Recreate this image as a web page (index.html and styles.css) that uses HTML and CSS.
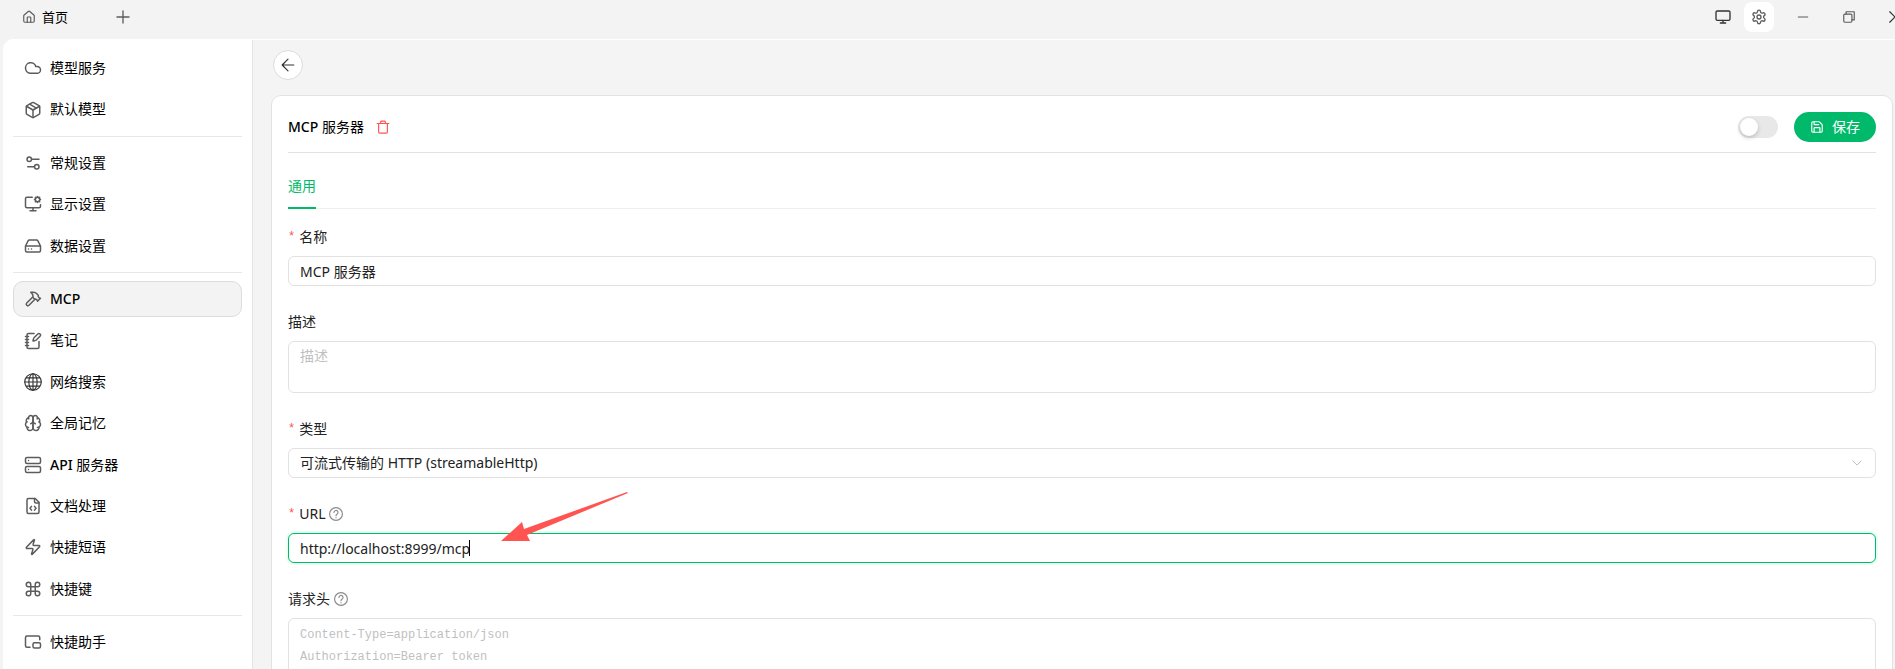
FILE: index.html
```html
<!DOCTYPE html>
<html lang="zh-CN">
<head>
<meta charset="utf-8">
<title>MCP 服务器</title>
<link rel="stylesheet" href="styles.css">
</head>
<body>
<header class="titlebar">
  <button class="tab-home" type="button">
    <svg class="icon i14" viewBox="0 0 24 24"><path d="M15 21v-8a1 1 0 0 0-1-1h-4a1 1 0 0 0-1 1v8"/><path d="M3 10a2 2 0 0 1 .7-1.5l7-6a2 2 0 0 1 2.6 0l7 6A2 2 0 0 1 21 10v9a2 2 0 0 1-2 2H5a2 2 0 0 1-2-2z"/></svg>
    <span>首页</span>
  </button>
  <button class="tab-add" type="button" aria-label="新建标签">
    <svg class="icon i16" viewBox="0 0 24 24"><path d="M3 12h18M12 3v18"/></svg>
  </button>
  <div class="title-tools">
    <button class="tool" type="button" aria-label="显示">
      <svg class="icon dark i16" viewBox="0 0 24 24"><rect x="1.500" y="3" width="21" height="14" rx="2"/><path d="M8 21h8M12 17v4"/></svg>
    </button>
    <button class="tool tool-active" type="button" aria-label="设置">
      <svg class="icon i16" viewBox="0 0 24 24"><path d="M9.700 4.100a2.300 2.300 0 0 1 4.600 0 2.300 2.300 0 0 0 3.300 1.900 2.300 2.300 0 0 1 2.300 4 2.300 2.300 0 0 0 0 3.900 2.300 2.300 0 0 1-2.300 4 2.300 2.300 0 0 0-3.300 1.900 2.300 2.300 0 0 1-4.600 0 2.300 2.300 0 0 0-3.300-1.900 2.300 2.300 0 0 1-2.300-4 2.300 2.300 0 0 0 0-3.900 2.300 2.300 0 0 1 2.300-4 2.300 2.300 0 0 0 3.300-1.900"/><circle cx="12" cy="12" r="3"/></svg>
    </button>
    <div class="window-controls">
      <button type="button" aria-label="最小化"><svg class="icon i14" viewBox="0 0 24 24"><path d="M4 12h16"/></svg></button>
      <button type="button" aria-label="还原"><svg class="icon i14" viewBox="0 0 24 24"><rect x="3" y="7" width="14" height="14" rx="2"/><path d="M7 7V3h14v14h-4"/></svg></button>
      <button type="button" aria-label="关闭"><svg class="icon dark i14" viewBox="0 0 24 24"><path d="M3 3l18 18M21 3L3 21"/></svg></button>
    </div>
  </div>
</header>

<div class="workspace">
  <nav class="sidebar">
    <a class="nav-item" href="#"><svg class="icon i18" viewBox="0 0 24 24"><path d="M17.500 19H9a7 7 0 1 1 6.710-9h1.790a4.500 4.500 0 1 1 0 9Z"/></svg>模型服务</a>
    <a class="nav-item" href="#"><svg class="icon i18" viewBox="0 0 24 24"><path d="M11 21.730a2 2 0 0 0 2 0l7-4A2 2 0 0 0 21 16V8a2 2 0 0 0-1-1.730l-7-4a2 2 0 0 0-2 0l-7 4A2 2 0 0 0 3 8v8a2 2 0 0 0 1 1.730z"/><path d="M12 22V12"/><path d="M3.300 7L12 12l8.700-5"/><path d="M7.500 4.270l9 5.150"/></svg>默认模型</a>
    <hr class="nav-divider">
    <a class="nav-item" href="#"><svg class="icon i18" viewBox="0 0 24 24"><path d="M20 7h-9M14 17H5"/><circle cx="17" cy="17" r="3"/><circle cx="7" cy="7" r="3"/></svg>常规设置</a>
    <a class="nav-item" href="#"><svg class="icon i18" viewBox="0 0 24 24"><path d="M12 17v4M8 21h8M22 13v2a2 2 0 0 1-2 2H4a2 2 0 0 1-2-2V5a2 2 0 0 1 2-2h7"/><circle cx="18" cy="6" r="3"/><path d="M18 3V2M18 10V9M21 6h1M14 6h1M20.100 3.900l.8-.8M15.100 8.900l.8-.8M20.100 8.100l.8.8M15.100 3.100l.8.8"/></svg>显示设置</a>
    <a class="nav-item" href="#"><svg class="icon i18" viewBox="0 0 24 24"><path d="M22 12H2M5.450 5.110L2 12v6a2 2 0 0 0 2 2h16a2 2 0 0 0 2-2v-6l-3.450-6.890A2 2 0 0 0 16.760 4H7.240a2 2 0 0 0-1.790 1.110zM6 16h.01M10 16h.01"/></svg>数据设置</a>
    <hr class="nav-divider">
    <a class="nav-item nav-current" href="#" aria-current="page"><svg class="icon i18" viewBox="0 0 24 24"><path d="M15 12l-8.373 8.373a1 1 0 1 1-3-3L12 9M18 15l4-4M21.500 11.500l-1.914-1.914A2 2 0 0 1 19 8.172V7l-2.260-2.260a6 6 0 0 0-4.202-1.756L9 2.960l.920.820A6.180 6.180 0 0 1 12 8.400V10l2 2h1.172a2 2 0 0 1 1.414.586L18.500 14.500"/></svg><span class="latin">MCP</span></a>
    <a class="nav-item" href="#"><svg class="icon i18" viewBox="0 0 24 24"><path d="M13.400 2H6a2 2 0 0 0-2 2v16a2 2 0 0 0 2 2h12a2 2 0 0 0 2-2v-7.400M2 6h4M2 10h4M2 14h4M2 18h4"/><path d="M21.378 5.626a1 1 0 1 0-3.004-3.004l-5.010 5.012a2 2 0 0 0-.506.854l-.837 2.870a.5.5 0 0 0 .620.620l2.870-.837a2 2 0 0 0 .854-.506z"/></svg>笔记</a>
    <a class="nav-item" href="#"><svg class="icon dark fine i18" viewBox="0 0 24 24"><circle cx="12" cy="12" r="11"/><ellipse cx="12" cy="12" rx="5.500" ry="11"/><path d="M12 1v22M1 12h22M3 6.500h18M3 17.500h18"/></svg>网络搜索</a>
    <a class="nav-item" href="#"><svg class="icon i18" viewBox="0 0 24 24"><path d="M12 5a3 3 0 1 0-5.997.125 4 4 0 0 0-2.526 5.770 4 4 0 0 0 .556 6.588A4 4 0 1 0 12 18Z"/><path d="M12 5a3 3 0 1 1 5.997.125 4 4 0 0 1 2.526 5.770 4 4 0 0 1-.556 6.588A4 4 0 1 1 12 18Z"/><path d="M15 13a4.500 4.500 0 0 1-3-4 4.500 4.500 0 0 1-3 4M17.599 6.500a3 3 0 0 0 .399-1.375M6.003 5.125A3 3 0 0 0 6.401 6.500M3.477 10.896a4 4 0 0 1 .585-.396M19.938 10.500a4 4 0 0 1 .585.396M6 18a4 4 0 0 1-1.967-.516M19.967 17.484A4 4 0 0 1 18 18"/></svg>全局记忆</a>
    <a class="nav-item" href="#"><svg class="icon i18" viewBox="0 0 24 24"><rect x="2" y="2" width="20" height="8" rx="2"/><rect x="2" y="14" width="20" height="8" rx="2"/><path d="M6 6h.01M6 18h.01"/></svg><span><span class="latin">API</span> 服务器</span></a>
    <a class="nav-item" href="#"><svg class="icon i18" viewBox="0 0 24 24"><path d="M15 2H6a2 2 0 0 0-2 2v16a2 2 0 0 0 2 2h12a2 2 0 0 0 2-2V7Z"/><path d="M14 2v4a2 2 0 0 0 2 2h4M10 12.500L8 15l2 2.500M14 12.500l2 2.500-2 2.500"/></svg>文档处理</a>
    <a class="nav-item" href="#"><svg class="icon i18" viewBox="0 0 24 24"><path d="M4 14a1 1 0 0 1-.780-1.630l9.900-10.200a.5.5 0 0 1 .860.460l-1.920 6.020A1 1 0 0 0 13 10h7a1 1 0 0 1 .780 1.630l-9.900 10.200a.5.5 0 0 1-.860-.460l1.920-6.020A1 1 0 0 0 11 14z"/></svg>快捷短语</a>
    <a class="nav-item" href="#"><svg class="icon i18" viewBox="0 0 24 24"><path d="M15 6v12a3 3 0 1 0 3-3H6a3 3 0 1 0 3 3V6a3 3 0 1 0-3 3h12a3 3 0 1 0-3-3"/></svg>快捷键</a>
    <hr class="nav-divider">
    <a class="nav-item" href="#"><svg class="icon i18" viewBox="0 0 24 24"><path d="M21 9V6a2 2 0 0 0-2-2H4a2 2 0 0 0-2 2v11a2 2 0 0 0 2 2h4"/><rect x="12" y="13" width="10" height="7" rx="2"/></svg>快捷助手</a>
  </nav>

  <main class="content">
    <button class="back" type="button" aria-label="返回">
      <svg class="icon dark i14" viewBox="0 0 24 24"><path d="M12 2L2 12l10 10M2 12h20"/></svg>
    </button>
    <section class="card">
      <div class="card-head">
        <h1 class="card-title"><span class="latin">MCP</span> 服务器</h1>
        <button class="delete" type="button" aria-label="删除">
          <svg class="icon danger i14" viewBox="0 0 24 24"><path d="M2 6h20M4.500 6v14.500a2 2 0 0 0 2 2h11a2 2 0 0 0 2-2V6M8 6V3.500A1.500 1.500 0 0 1 9.500 2h5A1.500 1.500 0 0 1 16 3.500V6"/></svg>
        </button>
        <input class="switch" type="checkbox" role="switch" aria-label="启用">
        <button class="save" type="button">
          <svg class="icon light i14" viewBox="0 0 24 24"><path d="M15.200 3a2 2 0 0 1 1.400.6l3.800 3.800a2 2 0 0 1 .6 1.400V19a2 2 0 0 1-2 2H5a2 2 0 0 1-2-2V5a2 2 0 0 1 2-2z"/><path d="M17 21v-7a1 1 0 0 0-1-1H8a1 1 0 0 0-1 1v7M7 3v4a1 1 0 0 0 1 1h7"/></svg>
          保存
        </button>
      </div>
      <div class="tabs" role="tablist">
        <button class="tab" type="button" role="tab" aria-selected="true">通用</button>
      </div>
      <form class="form">
        <div class="field">
          <label class="label required" for="name">名称</label>
          <input class="control" id="name" type="text" value="MCP 服务器">
        </div>
        <div class="field">
          <label class="label" for="desc">描述</label>
          <textarea class="control area" id="desc" rows="2" placeholder="描述"></textarea>
        </div>
        <div class="field">
          <label class="label required" for="type">类型</label>
          <div class="select-box">
            <select class="control" id="type"><option>可流式传输的 HTTP (streamableHttp)</option></select>
            <svg class="icon chevron" viewBox="0 0 24 24"><path d="M2 7l10 10L22 7"/></svg>
          </div>
        </div>
        <div class="field">
          <label class="label required" for="url">URL
            <svg class="icon help i14" viewBox="0 0 24 24"><circle cx="12" cy="12" r="11"/><path d="M8.500 9.500a3.500 3.500 0 1 1 5.200 3c-1.200.7-1.700 1.200-1.700 2.500M12 18v.5"/></svg>
          </label>
          <input class="control focused" id="url" type="text" value="http://localhost:8999/mcp">
          <span class="caret"></span>
          <svg class="arrow" viewBox="0 0 127 50"><path d="M0 49L21 30L23 37L126 0L127 1L26 43L29 49Z"/></svg>
        </div>
        <div class="field">
          <label class="label" for="headers">请求头
            <svg class="icon help i14" viewBox="0 0 24 24"><circle cx="12" cy="12" r="11"/><path d="M8.500 9.500a3.500 3.500 0 1 1 5.200 3c-1.200.7-1.700 1.200-1.700 2.500M12 18v.5"/></svg>
          </label>
          <textarea class="control area mono" id="headers" rows="4" placeholder="Content-Type=application/json&#10;Authorization=Bearer token"></textarea>
        </div>
      </form>
    </section>
  </main>
</div>
</body>
</html>
```
FILE: styles.css
```css
* {
  box-sizing: border-box;
}

body {
  margin: 0;
  height: 100vh;
  display: flex;
  flex-direction: column;
  overflow: hidden;
  background: #f3f3f3;
  color: #000;
  font-family: "Noto Sans", "Noto Sans CJK SC", sans-serif;
  font-size: 14px;
  line-height: 22px;
}

button,
input,
select,
textarea {
  font: inherit;
  color: inherit;
  margin: 0;
}

button {
  display: flex;
  align-items: center;
  justify-content: center;
  padding: 0;
  border: 0;
  background: none;
}

.icon {
  flex: none;
  fill: none;
  stroke: #5c5c5c;
  stroke-width: 2;
  stroke-linecap: round;
  stroke-linejoin: round;
}

.i14 { width: 14px; height: 14px; }
.i16 { width: 16px; height: 16px; }
.i18 { width: 18px; height: 18px; }
.dark { stroke: #333; }
.fine { stroke-width: 1.5; }
.danger { stroke: #ff5452; }
.light { stroke: #fff; }

.latin {
  font-weight: 500;
}

/* Title bar */
.titlebar {
  flex: none;
  display: flex;
  align-items: center;
  height: 39px;
  padding: 0 0 5px 22px;
  overflow: hidden;
}

.tab-home {
  gap: 6px;
  font-size: 13px;
}

.tab-add {
  width: 30px;
  height: 30px;
  margin-left: 40px;
}

.title-tools {
  display: flex;
  align-items: center;
  gap: 6px;
  margin-left: auto;
  margin-right: -23px;
}

.tool {
  width: 30px;
  height: 30px;
  border-radius: 8px;
}

.tool-active {
  background: #fff;
}

.window-controls {
  display: flex;
}

.window-controls button {
  width: 46px;
  height: 30px;
}

/* Body */
.workspace {
  flex: 1;
  display: flex;
  min-height: 0;
  margin-left: 3px;
  border-top: 1px solid #fff;
  border-top-left-radius: 10px;
  overflow: hidden;
}

.sidebar {
  flex: none;
  display: flex;
  flex-direction: column;
  gap: 5px;
  width: 250px;
  padding: 10px;
  border-right: 1px solid #e4e4e4;
  background: #fff;
  overflow: hidden;
}

.nav-item {
  flex: none;
  display: flex;
  align-items: center;
  gap: 8px;
  padding: 6px 10px;
  border: 1px solid transparent;
  border-radius: 10px;
  color: #000;
  line-height: 1.6;
  text-decoration: none;
}

.nav-current {
  border-color: #dcdcdc;
  background: #f3f3f3;
}

.nav-divider {
  flex: none;
  width: 100%;
  height: 1px;
  margin: 3px 0;
  border: 0;
  background: #e8e8e8;
}

.content {
  flex: 1;
  min-width: 0;
  padding: 10px 2px 0 18px;
  background: #f4f4f4;
  overflow: hidden;
}

.back {
  width: 30px;
  height: 30px;
  margin: 0 0 15px 2px;
  border: 1px solid #dcdcdc;
  border-radius: 50%;
  background: #fff;
}

.card {
  padding: 16px;
  border: 1px solid #e2e2e2;
  border-radius: 10px;
  background: #fff;
}

.card-head {
  display: flex;
  align-items: center;
  padding-bottom: 10px;
  border-bottom: 1px solid #e2e2e2;
}

.card-title {
  margin: 0;
  font-size: 14px;
  font-weight: 400;
}

.delete {
  margin-left: 12px;
}

.switch {
  appearance: none;
  display: flex;
  width: 40px;
  height: 22px;
  margin: 0 16px 0 auto;
  padding: 2px;
  border-radius: 11px;
  background: #e8e8e8;
}

.switch::before {
  content: "";
  width: 18px;
  height: 18px;
  border-radius: 50%;
  background: #fff;
  box-shadow: 0 2px 4px rgba(0, 35, 11, 0.2);
}

.save {
  gap: 8px;
  height: 30px;
  padding: 0 16px;
  border-radius: 15px;
  background: #00b96b;
  color: #fff;
}

.tabs {
  display: flex;
  margin-bottom: 17px;
  padding-top: 12px;
  box-shadow: inset 0 -1px #efefef;
}

.tab {
  height: 44px;
  border-bottom: 2px solid #00b96b;
  color: #00b96b;
}

/* Form */
.form {
  color: #222;
}

.field {
  position: relative;
  margin-bottom: 25px;
}

.label {
  display: flex;
  align-items: center;
  gap: 4px;
  padding-bottom: 8px;
}

.required::before {
  content: "*";
  color: #ff4d4f;
  font-family: "Liberation Mono", monospace;
  font-size: 12px;
}

.help {
  stroke: #8c8c8c;
}

.control {
  display: block;
  width: 100%;
  height: 30px;
  padding: 3px 11px;
  border: 1px solid #e2e2e2;
  border-radius: 6px;
  outline: 0;
  background: #fff;
  appearance: none;
}

.control::placeholder {
  color: #bfbfbf;
}

.area {
  height: auto;
  resize: none;
}

.mono {
  padding-top: 5px;
  font-family: "Liberation Mono", "Noto Sans CJK SC", monospace;
  font-size: 12px;
}

.focused {
  border-color: #00b96b;
  box-shadow: 0 0 0 2px rgba(5, 255, 105, 0.1);
}

.select-box {
  position: relative;
}

.chevron {
  position: absolute;
  top: 10px;
  right: 14px;
  width: 10px;
  height: 10px;
  stroke: #b0b0b0;
}

.caret {
  position: absolute;
  left: 181px;
  bottom: 7px;
  width: 1px;
  height: 16px;
  background: #000;
}

.arrow {
  position: absolute;
  left: 213px;
  bottom: 21px;
  width: 127px;
  height: 50px;
  fill: #ff5452;
}
```
